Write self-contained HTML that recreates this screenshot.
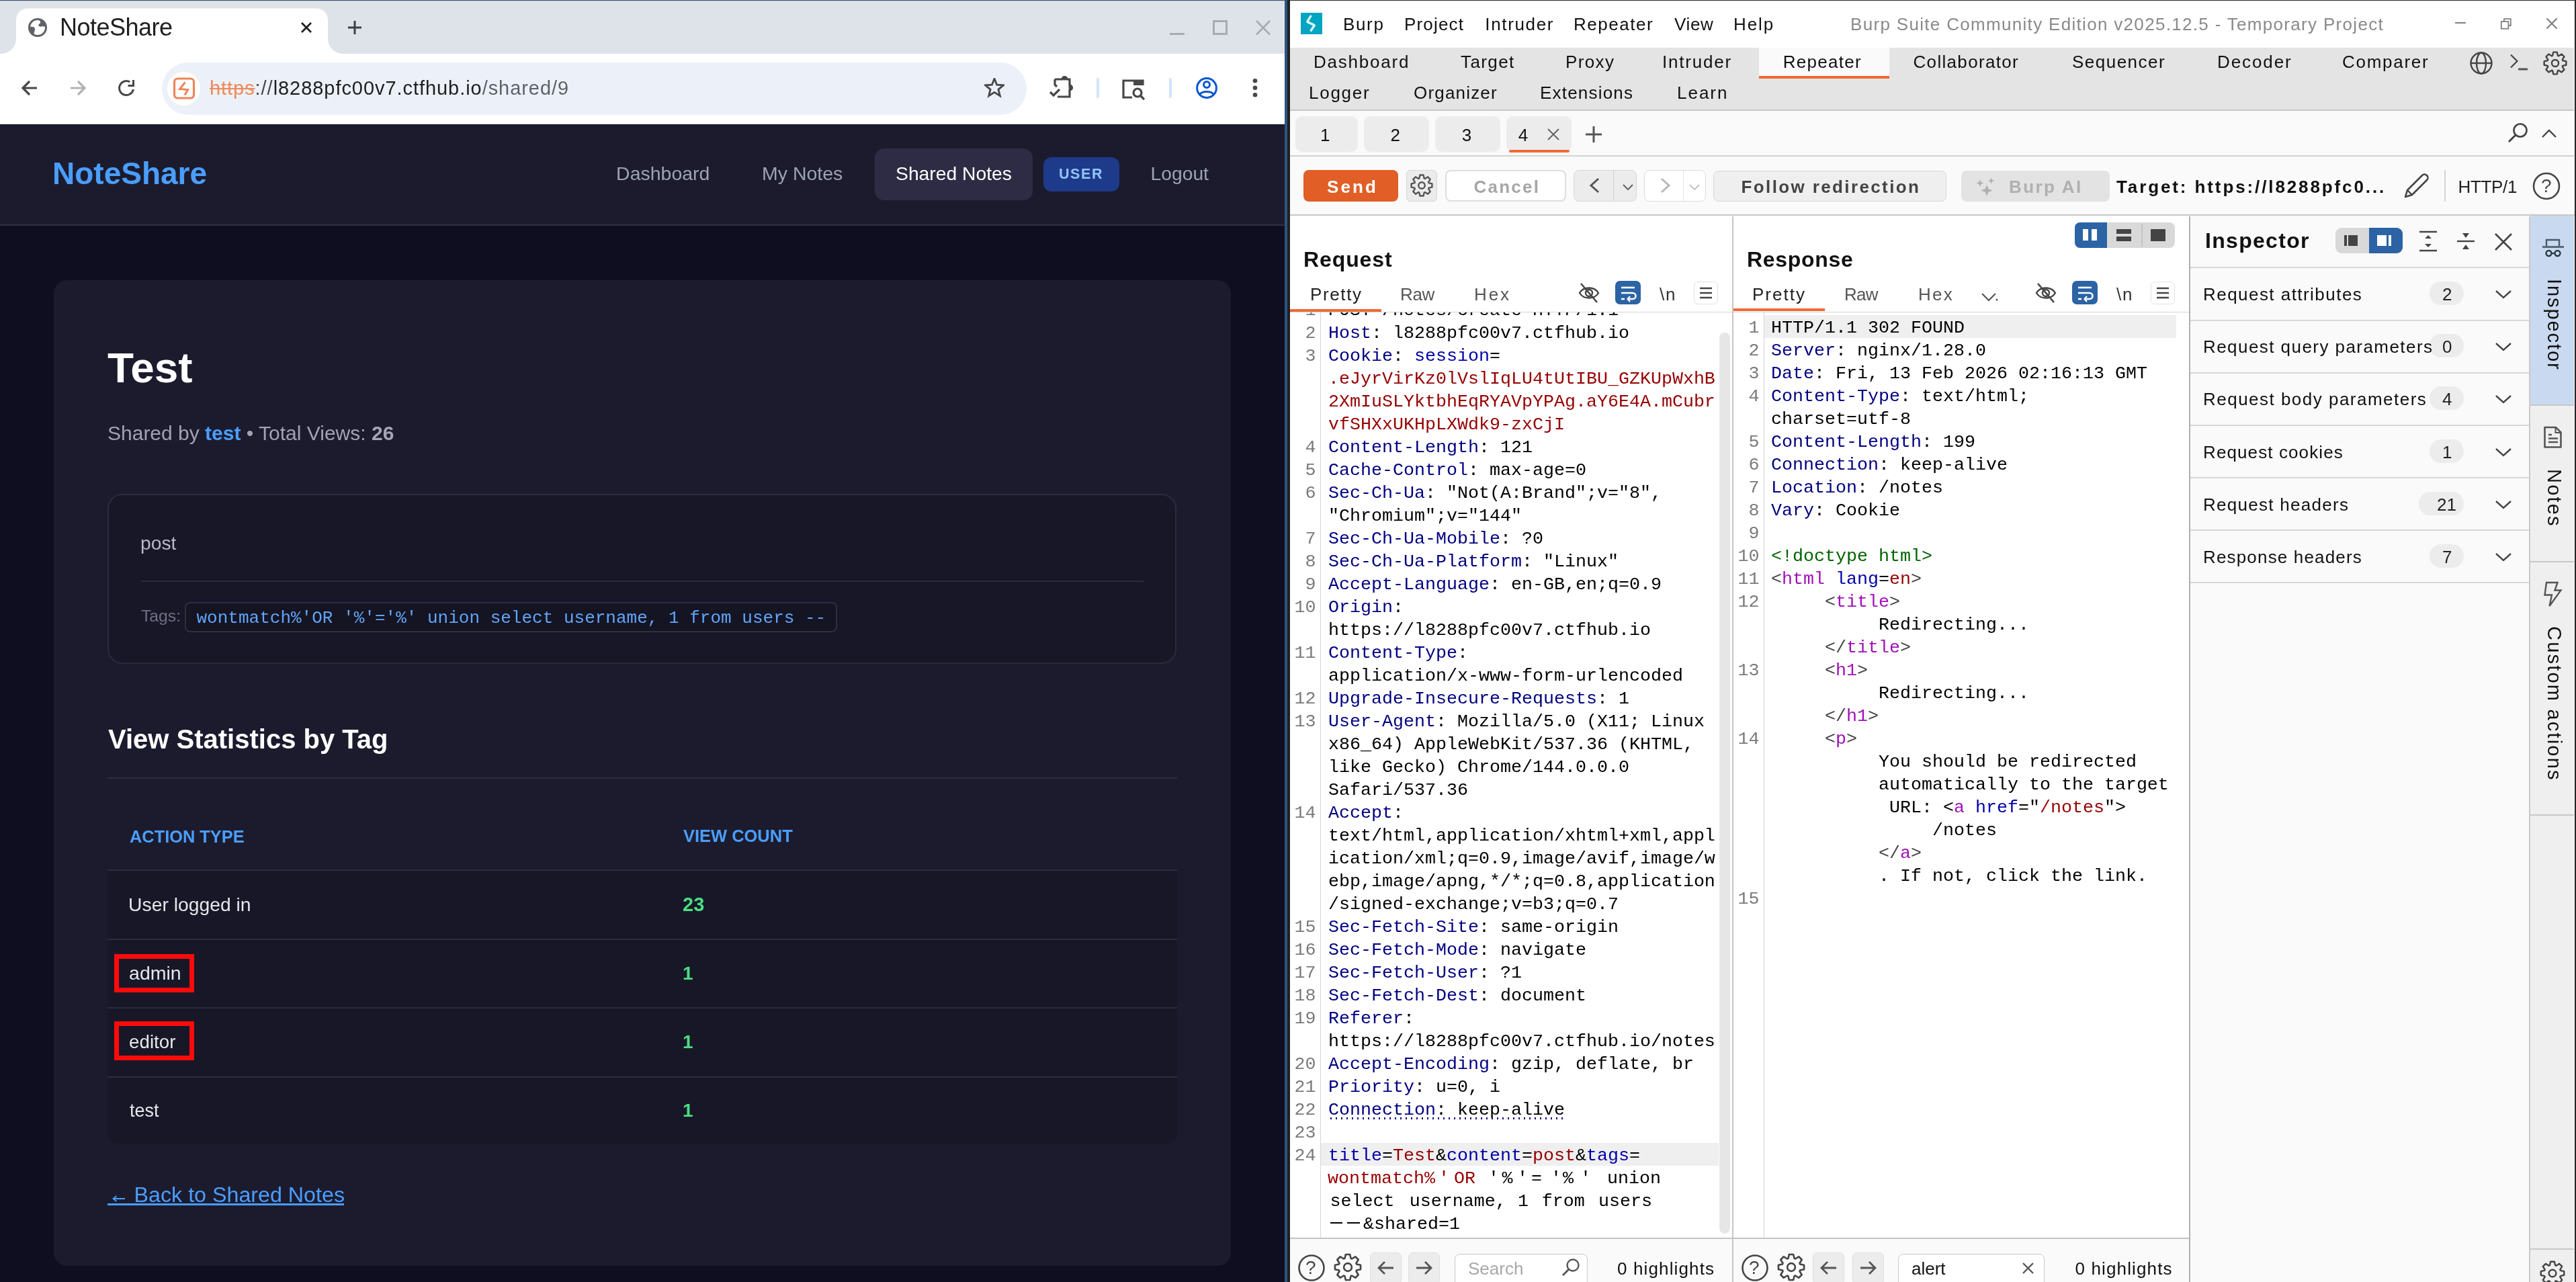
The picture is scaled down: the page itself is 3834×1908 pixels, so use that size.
<!DOCTYPE html>
<html><head><meta charset="utf-8"><style>
html,body{margin:0;padding:0}
body{width:3834px;height:1908px;position:relative;overflow:hidden;background:#fff;font-family:'Liberation Sans',sans-serif}
#W{position:absolute;left:0;top:0;width:3834px;height:1908px;overflow:hidden;will-change:transform}
#W>*{position:absolute;box-sizing:border-box}
</style></head><body><div id="W">
<div style="left:0px;top:0px;width:1912px;height:80px;background:#dee3ea;"></div>
<div style="left:0px;top:0px;width:1912px;height:1px;background:#3b5268;"></div>
<div style="left:0px;top:1px;width:1912px;height:1px;background:#c8d4e0;"></div>
<svg style="left:0px;top:0px;" width="530" height="82" viewBox="0 0 530 82"><path d="M2 80 A22 22 0 0 0 24 58 L24 29.5 A17 17 0 0 1 41 12.5 L471 12.5 A17 17 0 0 1 488 29.5 L488 58 A22 22 0 0 0 510 80 Z" fill="#fff"/></svg>
<svg style="left:42px;top:27px;" width="28" height="28" viewBox="0 0 28 28"><circle cx="14" cy="14" r="12.5" fill="none" stroke="#5f6368" stroke-width="3"/><path d="M14 1.5 C18 4 20 6 16 9 C14 11 17 14 21 12 L26 13 C26 8 22 3 14 1.5Z" fill="#5f6368"/><path d="M2 13 C6 12 10 13 10 16 C10 19 8 21 9 26 C5 24 2 19 2 13Z" fill="#5f6368"/></svg>
<div style="left:89.00px;top:22.58px;font:400 36px/36px 'Liberation Sans',sans-serif;color:#1f1f1f;white-space:pre;letter-spacing:-0.511px;">NoteShare</div>
<svg style="left:444px;top:29px;" width="24" height="24" viewBox="0 0 24 24"><path d="M5 5 L19 19 M19 5 L5 19" stroke="#1f1f1f" stroke-width="2.8"/></svg>
<svg style="left:514px;top:27px;" width="28" height="28" viewBox="0 0 28 28"><path d="M14 4 V24 M4 14 H24" stroke="#3c4043" stroke-width="3"/></svg>
<svg style="left:1736px;top:24px;" width="160" height="34" viewBox="0 0 160 34"><path d="M5 26.5 H26.8" stroke="#a7acb3" stroke-width="3"/><rect x="70.5" y="7.5" width="19" height="19" fill="none" stroke="#a7acb3" stroke-width="3"/><path d="M134 7 L154 27.5 M154 7 L134 27.5" stroke="#a7acb3" stroke-width="2.6"/></svg>
<div style="left:0px;top:80px;width:1912px;height:104px;background:#ffffff;"></div>
<svg style="left:28px;top:115px;" width="32" height="32" viewBox="0 0 32 32"><path d="M27 16 H7 M16 6 L6 16 L16 26" fill="none" stroke="#474747" stroke-width="3.2" stroke-linejoin="miter"/></svg>
<svg style="left:100px;top:115px;" width="32" height="32" viewBox="0 0 32 32"><path d="M5 16 H25 M16 6 L26 16 L16 26" fill="none" stroke="#b3b3b3" stroke-width="3.2"/></svg>
<svg style="left:176px;top:119px;" width="26" height="26" viewBox="0 0 26 26"><path d="M22.4 14 A10.5 10.5 0 1 1 17.2 2.9" fill="none" stroke="#474747" stroke-width="3"/><path d="M14.5 8.5 H22.5 V0" fill="none" stroke="#474747" stroke-width="3"/></svg>
<div style="left:241px;top:93px;width:1287px;height:78px;background:#ecf1f9;border-radius:39px"></div>
<div style="left:249px;top:107px;width:49px;height:50px;background:#ffffff;border-radius:25px"></div>
<svg style="left:256px;top:113px;" width="36" height="36" viewBox="0 0 36 36"><rect x="3.5" y="4" width="29" height="29" rx="5" fill="none" stroke="#ee8558" stroke-width="3.2"/><path d="M19.5 9.5 L11.5 19.5 L23.5 20.5 L19 28.5" fill="none" stroke="#ee8558" stroke-width="3" stroke-linejoin="miter"/></svg>
<div style="left:312.00px;top:117.09px;font:400 29px/29px 'Liberation Sans',sans-serif;color:#1f1f1f;white-space:pre;letter-spacing:0.946px;"><span style="color:#ef8a5a;text-decoration:line-through">https</span><span style="color:#474747">://</span><span style="color:#1f1f1f">l8288pfc00v7.ctfhub.io</span><span style="color:#5f6368">/shared/9</span></div>
<svg style="left:1465px;top:116px;" width="30" height="30" viewBox="0 0 30 30"><path d="M15.00 1.00 L18.64 10.18 L28.51 10.81 L20.90 17.12 L23.35 26.69 L15.00 21.40 L6.65 26.69 L9.10 17.12 L1.49 10.81 L11.36 10.18Z" fill="none" stroke="#474747" stroke-width="2.8" stroke-linejoin="miter"/></svg>
<svg style="left:1560px;top:110px;" width="42" height="38" viewBox="0 0 42 38"><path d="M10 8 H21 A3.5 3.5 0 0 1 28 8 H32 V17 A3.5 3.5 0 0 1 32 24 V34 H14" fill="none" stroke="#474747" stroke-width="3.2"/><path d="M10 8 V16 L13 19" fill="none" stroke="#474747" stroke-width="3.2"/><path d="M3 27 L8 32 L17 23" fill="none" stroke="#474747" stroke-width="3.2"/><circle cx="24.5" cy="6.5" r="3" fill="#474747"/><circle cx="33.5" cy="20.5" r="3" fill="#474747"/></svg>
<div style="left:1632px;top:116px;width:4px;height:30px;background:#d3e3fd;border-radius:2px"></div>
<svg style="left:1668px;top:114px;" width="40" height="36" viewBox="0 0 40 36"><path d="M17 31 H4 V6 H33 V13" fill="none" stroke="#474747" stroke-width="3.2"/><rect x="19" y="5" width="15" height="8" fill="#474747"/><circle cx="25" cy="24" r="6" fill="none" stroke="#474747" stroke-width="3.2"/><path d="M29.5 28.5 L35 34" stroke="#474747" stroke-width="3.2"/></svg>
<div style="left:1740px;top:116px;width:4px;height:30px;background:#d3e3fd;border-radius:2px"></div>
<svg style="left:1778px;top:113px;" width="36" height="36" viewBox="0 0 36 36"><circle cx="18" cy="18" r="14.4" fill="none" stroke="#0b57d0" stroke-width="3"/><circle cx="18" cy="13" r="4.5" fill="none" stroke="#0b57d0" stroke-width="3"/><path d="M7.5 27.5 C11 22 25 22 28.5 27.5" fill="none" stroke="#0b57d0" stroke-width="3"/></svg>
<svg style="left:1862px;top:114px;" width="12" height="34" viewBox="0 0 12 34"><circle cx="6" cy="6.2" r="3.3" fill="#474747"/><circle cx="6" cy="16.7" r="3.3" fill="#474747"/><circle cx="6" cy="27.3" r="3.3" fill="#474747"/></svg>
<div style="left:0px;top:184px;width:1912px;height:1724px;background:#0f0e21;"></div>
<div style="left:0px;top:184px;width:1912px;height:1px;background:#d6d9de;"></div>
<div style="left:0px;top:185px;width:1912px;height:149px;background:#1c1b2e;"></div>
<div style="left:0px;top:334px;width:1912px;height:2px;background:#2e2d43;"></div>
<div style="left:78.00px;top:234.63px;font:700 46.0px/46.0px 'Liberation Sans',sans-serif;color:#4a9eff;white-space:pre;">NoteShare</div>
<div style="left:917.10px;top:243.74px;font:400 28.47px/28.47px 'Liberation Sans',sans-serif;color:#9ca3af;white-space:pre;">Dashboard</div>
<div style="left:1134.10px;top:243.74px;font:400 28.47px/28.47px 'Liberation Sans',sans-serif;color:#9ca3af;white-space:pre;">My Notes</div>
<div style="left:1302px;top:221px;width:235px;height:77px;background:#2d2c44;border-radius:14px"></div>
<div style="left:1333.06px;top:243.91px;font:400 28.27px/28.27px 'Liberation Sans',sans-serif;color:#ffffff;white-space:pre;">Shared Notes</div>
<div style="left:1553px;top:234px;width:113px;height:51px;background:#1e3a8a;border-radius:12px"></div>
<div style="left:1576.00px;top:249.43px;font:700 21.5px/21.5px 'Liberation Sans',sans-serif;color:#93c5fd;white-space:pre;letter-spacing:1.598px;">USER</div>
<div style="left:1712.62px;top:243.95px;font:400 28.23px/28.23px 'Liberation Sans',sans-serif;color:#9ca3af;white-space:pre;">Logout</div>
<div style="left:80px;top:417px;width:1752px;height:1467px;background:#1c1b2e;border-radius:20px"></div>
<div style="left:160.00px;top:515.71px;font:700 63.77px/63.77px 'Liberation Sans',sans-serif;color:#ffffff;white-space:pre;">Test</div>
<div style="left:160.00px;top:629.65px;font:400 30px/30px 'Liberation Sans',sans-serif;color:#a1a1b5;white-space:pre;"><span style="color:#a1a1b5">Shared by </span><span style="color:#4a9eff;font-weight:700">test</span><span style="color:#a1a1b5"> • Total Views: </span><span style="color:#a4a6b8;font-weight:700">26</span></div>
<div style="left:160px;top:735px;width:1591px;height:253px;background:#181727;border:2px solid #2c2b40;border-radius:22px"></div>
<div style="left:209.06px;top:793.76px;font:400 28.21px/28.21px 'Liberation Sans',sans-serif;color:#b8b8c6;white-space:pre;">post</div>
<div style="left:210px;top:864px;width:1492px;height:2px;background:#2c2b40;"></div>
<div style="left:210.00px;top:905.40px;font:400 24.73px/24.73px 'Liberation Sans',sans-serif;color:#6e6e84;white-space:pre;">Tags:</div>
<div style="left:275px;top:896px;width:971px;height:45px;background:#151422;border:2px solid #2e2d42;border-radius:8px"></div>
<div style="left:292.50px;top:906.65px;font:400 26.02px/26.02px 'Liberation Mono',monospace;color:#60a5fa;white-space:pre;">wontmatch%'OR '%'='%' union select username, 1 from users --</div>
<div style="left:161.00px;top:1080.20px;font:700 40.0px/40.0px 'Liberation Sans',sans-serif;color:#ffffff;white-space:pre;">View Statistics by Tag</div>
<div style="left:160px;top:1157px;width:1592px;height:2px;background:#2c2b40;"></div>
<div style="left:193.00px;top:1232.55px;font:700 25.39px/25.39px 'Liberation Sans',sans-serif;color:#4a9eff;white-space:pre;">ACTION TYPE</div>
<div style="left:1017.00px;top:1232.47px;font:700 25.48px/25.48px 'Liberation Sans',sans-serif;color:#4a9eff;white-space:pre;">VIEW COUNT</div>
<div style="left:160px;top:1294px;width:1592px;height:2px;background:#2c2b40;"></div>
<div style="left:160px;top:1296px;width:1592px;height:406px;background:#181727;border-radius:0 0 16px 16px"></div>
<div style="left:160px;top:1397px;width:1592px;height:2px;background:#2c2b40;"></div>
<div style="left:160px;top:1499px;width:1592px;height:2px;background:#2c2b40;"></div>
<div style="left:160px;top:1602px;width:1592px;height:2px;background:#2c2b40;"></div>
<div style="left:191.11px;top:1332.39px;font:400 28.3px/28.3px 'Liberation Sans',sans-serif;color:#e5e7eb;white-space:pre;">User logged in</div>
<div style="left:192.05px;top:1434.24px;font:400 28.47px/28.47px 'Liberation Sans',sans-serif;color:#e5e7eb;white-space:pre;">admin</div>
<div style="left:192.08px;top:1537.09px;font:400 27.71px/27.71px 'Liberation Sans',sans-serif;color:#e5e7eb;white-space:pre;">editor</div>
<div style="left:193.00px;top:1640.24px;font:400 26.93px/26.93px 'Liberation Sans',sans-serif;color:#e5e7eb;white-space:pre;">test</div>
<div style="left:1016.03px;top:1331.82px;font:700 28.97px/28.97px 'Liberation Sans',sans-serif;color:#4ade80;white-space:pre;">23</div>
<div style="left:1016.00px;top:1434.64px;font:700 28px/28px 'Liberation Sans',sans-serif;color:#4ade80;white-space:pre;">1</div>
<div style="left:1016.00px;top:1536.84px;font:700 28px/28px 'Liberation Sans',sans-serif;color:#4ade80;white-space:pre;">1</div>
<div style="left:1016.00px;top:1639.34px;font:700 28px/28px 'Liberation Sans',sans-serif;color:#4ade80;white-space:pre;">1</div>
<div style="left:170px;top:1420px;width:119px;height:57px;background:transparent;border:7px solid #ff0a0a"></div>
<div style="left:170px;top:1520px;width:119px;height:58px;background:transparent;border:7px solid #ff0a0a"></div>
<div style="left:199.59px;top:1762.07px;font:400 32.22px/32.22px 'Liberation Sans',sans-serif;color:#4a9eff;white-space:pre;">Back to Shared Notes</div>
<div style="left:160px;top:1791px;width:352px;height:3px;background:#4a9eff;"></div>
<svg style="left:160px;top:1774px;" width="30" height="20" viewBox="0 0 30 20"><path d="M26 10 H9 M13.5 6 L8.5 10 L13.5 14" fill="none" stroke="#4a9eff" stroke-width="1.8"/></svg>
<div style="left:1912px;top:0px;width:4px;height:1908px;background:#2c5480;"></div>
<div style="left:1916px;top:0px;width:4px;height:1908px;background:#1f2123;"></div>
<div style="left:1920px;top:0px;width:1914px;height:1908px;background:#fafafa;"></div>
<div style="left:3832px;top:0px;width:2px;height:1908px;background:#262626;"></div>
<div style="left:1920px;top:0px;width:1911px;height:71px;background:#ffffff;"></div>
<div style="left:1920px;top:0px;width:1914px;height:1px;background:#262626;"></div>
<div style="left:1936px;top:19px;width:32px;height:32px;background:#00a5c2;"></div>
<svg style="left:1936px;top:19px;" width="32" height="32" viewBox="0 0 32 32"><path d="M15.5 4 L9.5 13.5 L20.5 18.5 L14.5 27.5" fill="none" stroke="#e4fbff" stroke-width="3.2" stroke-linejoin="bevel"/></svg>
<div style="left:1999.00px;top:23.33px;font:400 26px/26px 'Liberation Sans',sans-serif;color:#111;white-space:pre;letter-spacing:1.647px;">Burp</div>
<div style="left:2090.00px;top:23.33px;font:400 26px/26px 'Liberation Sans',sans-serif;color:#111;white-space:pre;letter-spacing:1.184px;">Project</div>
<div style="left:2210.30px;top:23.33px;font:400 26px/26px 'Liberation Sans',sans-serif;color:#111;white-space:pre;letter-spacing:1.651px;">Intruder</div>
<div style="left:2342.00px;top:23.33px;font:400 26px/26px 'Liberation Sans',sans-serif;color:#111;white-space:pre;letter-spacing:1.529px;">Repeater</div>
<div style="left:2492.00px;top:23.33px;font:400 26px/26px 'Liberation Sans',sans-serif;color:#111;white-space:pre;letter-spacing:0.631px;">View</div>
<div style="left:2580.00px;top:23.33px;font:400 26px/26px 'Liberation Sans',sans-serif;color:#111;white-space:pre;letter-spacing:1.896px;">Help</div>
<div style="left:2754.00px;top:23.33px;font:400 26px/26px 'Liberation Sans',sans-serif;color:#8a8a8a;white-space:pre;letter-spacing:1.318px;">Burp Suite Community Edition v2025.12.5 - Temporary Project</div>
<svg style="left:3645px;top:14px;" width="180" height="40" viewBox="0 0 180 40"><path d="M9 20 H25" stroke="#808080" stroke-width="2"/><rect x="77.8" y="18.1" width="10.6" height="10.6" fill="none" stroke="#808080" stroke-width="1.8"/><path d="M82 18 V14.1 H91.8 V24 H88.4" fill="none" stroke="#808080" stroke-width="1.8"/><path d="M145.5 13.5 L160.5 28.5 M160.5 13.5 L145.5 28.5" stroke="#808080" stroke-width="2.2"/></svg>
<div style="left:1920px;top:71px;width:1911px;height:92px;background:#e4e4e4;"></div>
<div style="left:1920px;top:163px;width:1911px;height:2px;background:#c6c6c6;"></div>
<div style="left:2618px;top:71px;width:194px;height:42px;background:#fafafa;"></div>
<div style="left:2618px;top:113px;width:194px;height:4px;background:#f06a35;"></div>
<div style="left:1955.00px;top:78.83px;font:400 26px/26px 'Liberation Sans',sans-serif;color:#111;white-space:pre;letter-spacing:1.783px;">Dashboard</div>
<div style="left:2174.00px;top:78.83px;font:400 26px/26px 'Liberation Sans',sans-serif;color:#111;white-space:pre;letter-spacing:1.392px;">Target</div>
<div style="left:2330.00px;top:78.83px;font:400 26px/26px 'Liberation Sans',sans-serif;color:#111;white-space:pre;letter-spacing:1.385px;">Proxy</div>
<div style="left:2474.00px;top:78.83px;font:400 26px/26px 'Liberation Sans',sans-serif;color:#111;white-space:pre;letter-spacing:1.794px;">Intruder</div>
<div style="left:2653.70px;top:78.83px;font:400 26px/26px 'Liberation Sans',sans-serif;color:#111;white-space:pre;letter-spacing:1.286px;">Repeater</div>
<div style="left:2847.50px;top:78.83px;font:400 26px/26px 'Liberation Sans',sans-serif;color:#111;white-space:pre;letter-spacing:1.321px;">Collaborator</div>
<div style="left:3084.00px;top:78.83px;font:400 26px/26px 'Liberation Sans',sans-serif;color:#111;white-space:pre;letter-spacing:1.487px;">Sequencer</div>
<div style="left:3300.00px;top:78.83px;font:400 26px/26px 'Liberation Sans',sans-serif;color:#111;white-space:pre;letter-spacing:1.897px;">Decoder</div>
<div style="left:3486.00px;top:78.83px;font:400 26px/26px 'Liberation Sans',sans-serif;color:#111;white-space:pre;letter-spacing:1.724px;">Comparer</div>
<div style="left:1948.00px;top:125.23px;font:400 26px/26px 'Liberation Sans',sans-serif;color:#111;white-space:pre;letter-spacing:1.740px;">Logger</div>
<div style="left:2104.00px;top:125.23px;font:400 26px/26px 'Liberation Sans',sans-serif;color:#111;white-space:pre;letter-spacing:1.188px;">Organizer</div>
<div style="left:2292.00px;top:125.23px;font:400 26px/26px 'Liberation Sans',sans-serif;color:#111;white-space:pre;letter-spacing:1.202px;">Extensions</div>
<div style="left:2496.00px;top:125.23px;font:400 26px/26px 'Liberation Sans',sans-serif;color:#111;white-space:pre;letter-spacing:1.990px;">Learn</div>
<svg style="left:3675px;top:76px;" width="36" height="36" viewBox="0 0 36 36"><circle cx="18" cy="18" r="15.5" fill="none" stroke="#444" stroke-width="2.4"/><ellipse cx="18" cy="18" rx="7" ry="15.5" fill="none" stroke="#444" stroke-width="2.4"/><path d="M2.5 18 H33.5" stroke="#444" stroke-width="2.4"/></svg>
<svg style="left:3731px;top:78px;" width="34" height="34" viewBox="0 0 34 34"><path d="M6 3.5 L15.5 13 L6 22.5" fill="none" stroke="#444" stroke-width="2.2"/><path d="M17 25 H31" stroke="#555" stroke-width="3"/></svg>
<svg style="left:3785px;top:76px;" width="36" height="36" viewBox="0 0 36 36"><path d="M29.22 14.09 L34.34 15.28 L34.34 20.72 L29.22 21.91 L28.70 23.16 L31.47 27.63 L27.63 31.47 L23.16 28.70 L21.91 29.22 L20.72 34.34 L15.28 34.34 L14.09 29.22 L12.84 28.70 L8.37 31.47 L4.53 27.63 L7.30 23.16 L6.78 21.91 L1.66 20.72 L1.66 15.28 L6.78 14.09 L7.30 12.84 L4.53 8.37 L8.37 4.53 L12.84 7.30 L14.09 6.78 L15.28 1.66 L20.72 1.66 L21.91 6.78 L23.16 7.30 L27.63 4.53 L31.47 8.37 L28.70 12.84Z" fill="none" stroke="#444" stroke-width="2.4" stroke-linejoin="round"/><circle cx="18.0" cy="18.0" r="5.040000000000001" fill="none" stroke="#444" stroke-width="2.4"/></svg>
<div style="left:1920px;top:165px;width:1911px;height:66px;background:#fafafa;"></div>
<div style="left:1920px;top:231px;width:1911px;height:2px;background:#d2d2d2;"></div>
<div style="left:1928px;top:173px;width:93px;height:53px;background:#ececec;border-radius:10px"></div>
<div style="left:2030px;top:173px;width:97px;height:53px;background:#ececec;border-radius:10px"></div>
<div style="left:2136px;top:173px;width:97px;height:53px;background:#ececec;border-radius:10px"></div>
<div style="left:2242px;top:173px;width:97px;height:53px;background:#ececec;border-radius:10px"></div>
<div style="left:1965.00px;top:187.53px;font:400 26px/26px 'Liberation Sans',sans-serif;color:#111;white-space:pre;">1</div>
<div style="left:2069.60px;top:187.53px;font:400 26px/26px 'Liberation Sans',sans-serif;color:#111;white-space:pre;">2</div>
<div style="left:2175.80px;top:187.53px;font:400 26px/26px 'Liberation Sans',sans-serif;color:#111;white-space:pre;">3</div>
<div style="left:2259.70px;top:187.53px;font:400 26px/26px 'Liberation Sans',sans-serif;color:#111;white-space:pre;">4</div>
<svg style="left:2300px;top:188px;" width="24" height="24" viewBox="0 0 24 24"><path d="M4 4 L20 20 M20 4 L4 20" stroke="#666" stroke-width="2"/></svg>
<div style="left:2246px;top:223px;width:90px;height:4px;background:#f06a35;border-radius:2px"></div>
<svg style="left:2356px;top:186px;" width="32" height="28" viewBox="0 0 32 28"><path d="M16 2 V26 M4 14 H28" stroke="#555" stroke-width="3"/></svg>
<svg style="left:3730px;top:180px;" width="36" height="36" viewBox="0 0 36 36"><circle cx="21" cy="14" r="9.5" fill="none" stroke="#444" stroke-width="2.6"/><path d="M14 21 L4 31" stroke="#444" stroke-width="3"/></svg>
<svg style="left:3779px;top:189px" width="30" height="20" viewBox="0 0 30 20"><rect width="30" height="22" fill="#fafafa"/><path d="M5 15 L15 5 L25 15" fill="none" stroke="#444" stroke-width="2.4"/></svg>
<div style="left:1920px;top:233px;width:1912px;height:87px;background:#fafafa;"></div>
<div style="left:1920px;top:319px;width:1912px;height:2px;background:#c8c8c8;"></div>
<div style="left:1940px;top:253px;width:141px;height:47px;background:#e15f27;border-radius:8px"></div>
<div style="left:1975.00px;top:265.03px;font:700 26px/26px 'Liberation Sans',sans-serif;color:#fff;white-space:pre;letter-spacing:3.105px;">Send</div>
<div style="left:2093px;top:253px;width:46px;height:47px;background:#ebebeb;border:1px solid #d6d6d6;border-radius:6px"></div>
<svg style="left:2099px;top:259px;" width="34" height="34" viewBox="0 0 34 34"><path d="M27.59 13.30 L32.43 14.43 L32.43 19.57 L27.59 20.70 L27.10 21.88 L29.72 26.09 L26.09 29.72 L21.88 27.10 L20.70 27.59 L19.57 32.43 L14.43 32.43 L13.30 27.59 L12.12 27.10 L7.91 29.72 L4.28 26.09 L6.90 21.88 L6.41 20.70 L1.57 19.57 L1.57 14.43 L6.41 13.30 L6.90 12.12 L4.28 7.91 L7.91 4.28 L12.12 6.90 L13.30 6.41 L14.43 1.57 L19.57 1.57 L20.70 6.41 L21.88 6.90 L26.09 4.28 L29.72 7.91 L27.10 12.12Z" fill="none" stroke="#555" stroke-width="2.4" stroke-linejoin="round"/><circle cx="17.0" cy="17.0" r="4.760000000000001" fill="none" stroke="#555" stroke-width="2.4"/></svg>
<div style="left:2151px;top:253px;width:180px;height:47px;background:#ffffff;border:2px solid #dedede;border-radius:8px"></div>
<div style="left:2193.40px;top:265.03px;font:700 26px/26px 'Liberation Sans',sans-serif;color:#a6a6a6;white-space:pre;letter-spacing:2.252px;">Cancel</div>
<div style="left:2342px;top:253px;width:94px;height:47px;background:#ececec;border:1px solid #d8d8d8;border-radius:8px"></div>
<div style="left:2401px;top:254px;width:1px;height:45px;background:#d0d0d0;"></div>
<svg style="left:2362px;top:263px;" width="24" height="26" viewBox="0 0 24 26"><path d="M17 3 L6 13 L17 23" fill="none" stroke="#555" stroke-width="3"/></svg>
<svg style="left:2414px;top:273px;" width="18" height="12" viewBox="0 0 18 12"><path d="M2 2 L9.0 9 L16 2" fill="none" stroke="#666" stroke-width="2.2"/></svg>
<div style="left:2447px;top:253px;width:92px;height:47px;background:#ffffff;border:1px solid #dcdcdc;border-radius:8px"></div>
<div style="left:2505px;top:254px;width:1px;height:45px;background:#e2e2e2;"></div>
<svg style="left:2466px;top:263px;" width="24" height="26" viewBox="0 0 24 26"><path d="M7 3 L18 13 L7 23" fill="none" stroke="#b8b8b8" stroke-width="3"/></svg>
<svg style="left:2513px;top:273px;" width="18" height="12" viewBox="0 0 18 12"><path d="M2 2 L9.0 9 L16 2" fill="none" stroke="#c4c4c4" stroke-width="2.2"/></svg>
<div style="left:2550px;top:254px;width:347px;height:46px;background:#efefef;border:1px solid #d8d8d8;border-radius:8px"></div>
<div style="left:2591.50px;top:265.03px;font:700 26px/26px 'Liberation Sans',sans-serif;color:#444;white-space:pre;letter-spacing:2.381px;">Follow redirection</div>
<div style="left:2919px;top:254px;width:221px;height:46px;background:#e3e3e3;border-radius:8px"></div>
<svg style="left:2938px;top:262px;" width="34" height="34" viewBox="0 0 34 34"><path d="M19 13.0 L21.38 19.12 L27.5 21.5 L21.38 23.88 L19 30.0 L16.62 23.88 L10.5 21.5 L16.62 19.12Z" fill="#b0b0b0"/><path d="M9 5.0 L10.54 8.96 L14.5 10.5 L10.54 12.04 L9 16.0 L7.46 12.04 L3.5 10.5 L7.46 8.96Z" fill="#b0b0b0"/><path d="M25.5 2.2 L26.844 5.656 L30.3 7 L26.844 8.344 L25.5 11.8 L24.156 8.344 L20.7 7 L24.156 5.656Z" fill="#b0b0b0"/></svg>
<div style="left:2990.00px;top:265.03px;font:700 26px/26px 'Liberation Sans',sans-serif;color:#b0b0b0;white-space:pre;letter-spacing:2.390px;">Burp AI</div>
<div style="left:3150.00px;top:264.83px;font:700 26px/26px 'Liberation Sans',sans-serif;color:#111;white-space:pre;letter-spacing:2.888px;">Target: https://l8288pfc0...</div>
<svg style="left:3574px;top:255px;" width="44" height="44" viewBox="0 0 44 44"><path d="M6 38 L9 28 L31 6 A3.5 3.5 0 0 1 38 13 L16 35 Z" fill="none" stroke="#444" stroke-width="2.6" stroke-linejoin="round"/><path d="M9 28 L16 35" stroke="#444" stroke-width="2.4"/></svg>
<div style="left:3638px;top:253px;width:2px;height:47px;background:#d4d4d4;"></div>
<div style="left:3658.50px;top:264.83px;font:400 26px/26px 'Liberation Sans',sans-serif;color:#222;white-space:pre;letter-spacing:-0.321px;">HTTP/1</div>
<svg style="left:3768px;top:255px;" width="44" height="44" viewBox="0 0 44 44"><circle cx="22" cy="22" r="19" fill="none" stroke="#444" stroke-width="2.6"/></svg>
<div style="left:3782.00px;top:263.34px;font:400 28px/28px 'Liberation Sans',sans-serif;color:#444;white-space:pre;">?</div>
<div style="left:1920px;top:322px;width:658px;height:1520px;background:#ffffff;"></div>
<div style="left:2580px;top:322px;width:678px;height:1520px;background:#ffffff;"></div>
<div style="left:2578px;top:322px;width:2px;height:1586px;background:#c4c4c4;"></div>
<div style="left:3258px;top:322px;width:2px;height:1586px;background:#b0b0b0;"></div>
<div style="left:3260px;top:322px;width:504px;height:1586px;background:#fafafa;"></div>
<div style="left:3764px;top:322px;width:2px;height:1586px;background:#c8c8c8;"></div>
<div style="left:3766px;top:322px;width:65px;height:1586px;background:#f0eff0;"></div>
<div style="left:1966px;top:1701px;width:592px;height:34px;background:#efefef;"></div>
<div style="left:1965px;top:465px;width:1px;height:1377px;background:#d6d6d6;"></div>
<div style="left:2559px;top:495px;width:16px;height:1341px;background:#e6e6e6;border-radius:8px"></div>
<div style="left:1977.00px;top:448.57px;font:400 26.66px/26.66px 'Liberation Mono',monospace;color:#000000;white-space:pre;">POST /notes/create HTTP/1.1</div>
<div style="left:1977.00px;top:482.57px;font:400 26.66px/26.66px 'Liberation Mono',monospace;color:#000080;white-space:pre;">Host</div>
<div style="left:2041.00px;top:482.57px;font:400 26.66px/26.66px 'Liberation Mono',monospace;color:#000000;white-space:pre;">:</div>
<div style="left:2057.00px;top:482.57px;font:400 26.66px/26.66px 'Liberation Mono',monospace;color:#000000;white-space:pre;"> l8288pfc00v7.ctfhub.io</div>
<div style="left:1977.00px;top:516.57px;font:400 26.66px/26.66px 'Liberation Mono',monospace;color:#000080;white-space:pre;">Cookie</div>
<div style="left:2073.00px;top:516.57px;font:400 26.66px/26.66px 'Liberation Mono',monospace;color:#000000;white-space:pre;">:</div>
<div style="left:2105.00px;top:516.57px;font:400 26.66px/26.66px 'Liberation Mono',monospace;color:#0000a8;white-space:pre;">session</div>
<div style="left:2217.00px;top:516.57px;font:400 26.66px/26.66px 'Liberation Mono',monospace;color:#000000;white-space:pre;">=</div>
<div style="left:1977.00px;top:550.57px;font:400 26.66px/26.66px 'Liberation Mono',monospace;color:#960000;white-space:pre;">.eJyrVirKz0lVslIqLU4tUtIBU_GZKUpWxhB</div>
<div style="left:1977.00px;top:584.57px;font:400 26.66px/26.66px 'Liberation Mono',monospace;color:#960000;white-space:pre;">2XmIuSLYktbhEqRYAVpYPAg.aY6E4A.mCubr</div>
<div style="left:1977.00px;top:618.57px;font:400 26.66px/26.66px 'Liberation Mono',monospace;color:#960000;white-space:pre;">vfSHXxUKHpLXWdk9-zxCjI</div>
<div style="left:1977.00px;top:652.57px;font:400 26.66px/26.66px 'Liberation Mono',monospace;color:#000080;white-space:pre;">Content-Length</div>
<div style="left:2201.00px;top:652.57px;font:400 26.66px/26.66px 'Liberation Mono',monospace;color:#000000;white-space:pre;">:</div>
<div style="left:2217.00px;top:652.57px;font:400 26.66px/26.66px 'Liberation Mono',monospace;color:#000000;white-space:pre;"> 121</div>
<div style="left:1977.00px;top:686.57px;font:400 26.66px/26.66px 'Liberation Mono',monospace;color:#000080;white-space:pre;">Cache-Control</div>
<div style="left:2185.00px;top:686.57px;font:400 26.66px/26.66px 'Liberation Mono',monospace;color:#000000;white-space:pre;">:</div>
<div style="left:2201.00px;top:686.57px;font:400 26.66px/26.66px 'Liberation Mono',monospace;color:#000000;white-space:pre;"> max-age=0</div>
<div style="left:1977.00px;top:720.57px;font:400 26.66px/26.66px 'Liberation Mono',monospace;color:#000080;white-space:pre;">Sec-Ch-Ua</div>
<div style="left:2121.00px;top:720.57px;font:400 26.66px/26.66px 'Liberation Mono',monospace;color:#000000;white-space:pre;">:</div>
<div style="left:2137.00px;top:720.57px;font:400 26.66px/26.66px 'Liberation Mono',monospace;color:#000000;white-space:pre;"> "Not(A:Brand";v="8",</div>
<div style="left:1977.00px;top:754.57px;font:400 26.66px/26.66px 'Liberation Mono',monospace;color:#000000;white-space:pre;">"Chromium";v="144"</div>
<div style="left:1977.00px;top:788.57px;font:400 26.66px/26.66px 'Liberation Mono',monospace;color:#000080;white-space:pre;">Sec-Ch-Ua-Mobile</div>
<div style="left:2233.00px;top:788.57px;font:400 26.66px/26.66px 'Liberation Mono',monospace;color:#000000;white-space:pre;">:</div>
<div style="left:2249.00px;top:788.57px;font:400 26.66px/26.66px 'Liberation Mono',monospace;color:#000000;white-space:pre;"> ?0</div>
<div style="left:1977.00px;top:822.57px;font:400 26.66px/26.66px 'Liberation Mono',monospace;color:#000080;white-space:pre;">Sec-Ch-Ua-Platform</div>
<div style="left:2265.00px;top:822.57px;font:400 26.66px/26.66px 'Liberation Mono',monospace;color:#000000;white-space:pre;">:</div>
<div style="left:2281.00px;top:822.57px;font:400 26.66px/26.66px 'Liberation Mono',monospace;color:#000000;white-space:pre;"> "Linux"</div>
<div style="left:1977.00px;top:856.57px;font:400 26.66px/26.66px 'Liberation Mono',monospace;color:#000080;white-space:pre;">Accept-Language</div>
<div style="left:2217.00px;top:856.57px;font:400 26.66px/26.66px 'Liberation Mono',monospace;color:#000000;white-space:pre;">:</div>
<div style="left:2233.00px;top:856.57px;font:400 26.66px/26.66px 'Liberation Mono',monospace;color:#000000;white-space:pre;"> en-GB,en;q=0.9</div>
<div style="left:1977.00px;top:890.57px;font:400 26.66px/26.66px 'Liberation Mono',monospace;color:#000080;white-space:pre;">Origin</div>
<div style="left:2073.00px;top:890.57px;font:400 26.66px/26.66px 'Liberation Mono',monospace;color:#000000;white-space:pre;">:</div>
<div style="left:1977.00px;top:924.57px;font:400 26.66px/26.66px 'Liberation Mono',monospace;color:#000000;white-space:pre;">https://l8288pfc00v7.ctfhub.io</div>
<div style="left:1977.00px;top:958.57px;font:400 26.66px/26.66px 'Liberation Mono',monospace;color:#000080;white-space:pre;">Content-Type</div>
<div style="left:2169.00px;top:958.57px;font:400 26.66px/26.66px 'Liberation Mono',monospace;color:#000000;white-space:pre;">:</div>
<div style="left:1977.00px;top:992.57px;font:400 26.66px/26.66px 'Liberation Mono',monospace;color:#000000;white-space:pre;">application/x-www-form-urlencoded</div>
<div style="left:1977.00px;top:1026.57px;font:400 26.66px/26.66px 'Liberation Mono',monospace;color:#000080;white-space:pre;">Upgrade-Insecure-Requests</div>
<div style="left:2377.00px;top:1026.57px;font:400 26.66px/26.66px 'Liberation Mono',monospace;color:#000000;white-space:pre;">:</div>
<div style="left:2393.00px;top:1026.57px;font:400 26.66px/26.66px 'Liberation Mono',monospace;color:#000000;white-space:pre;"> 1</div>
<div style="left:1977.00px;top:1060.57px;font:400 26.66px/26.66px 'Liberation Mono',monospace;color:#000080;white-space:pre;">User-Agent</div>
<div style="left:2137.00px;top:1060.57px;font:400 26.66px/26.66px 'Liberation Mono',monospace;color:#000000;white-space:pre;">:</div>
<div style="left:2153.00px;top:1060.57px;font:400 26.66px/26.66px 'Liberation Mono',monospace;color:#000000;white-space:pre;"> Mozilla/5.0 (X11; Linux</div>
<div style="left:1977.00px;top:1094.57px;font:400 26.66px/26.66px 'Liberation Mono',monospace;color:#000000;white-space:pre;">x86_64) AppleWebKit/537.36 (KHTML,</div>
<div style="left:1977.00px;top:1128.57px;font:400 26.66px/26.66px 'Liberation Mono',monospace;color:#000000;white-space:pre;">like Gecko) Chrome/144.0.0.0</div>
<div style="left:1977.00px;top:1162.57px;font:400 26.66px/26.66px 'Liberation Mono',monospace;color:#000000;white-space:pre;">Safari/537.36</div>
<div style="left:1977.00px;top:1196.57px;font:400 26.66px/26.66px 'Liberation Mono',monospace;color:#000080;white-space:pre;">Accept</div>
<div style="left:2073.00px;top:1196.57px;font:400 26.66px/26.66px 'Liberation Mono',monospace;color:#000000;white-space:pre;">:</div>
<div style="left:1977.00px;top:1230.57px;font:400 26.66px/26.66px 'Liberation Mono',monospace;color:#000000;white-space:pre;">text/html,application/xhtml+xml,appl</div>
<div style="left:1977.00px;top:1264.57px;font:400 26.66px/26.66px 'Liberation Mono',monospace;color:#000000;white-space:pre;">ication/xml;q=0.9,image/avif,image/w</div>
<div style="left:1977.00px;top:1298.57px;font:400 26.66px/26.66px 'Liberation Mono',monospace;color:#000000;white-space:pre;">ebp,image/apng,*/*;q=0.8,application</div>
<div style="left:1977.00px;top:1332.57px;font:400 26.66px/26.66px 'Liberation Mono',monospace;color:#000000;white-space:pre;">/signed-exchange;v=b3;q=0.7</div>
<div style="left:1977.00px;top:1366.57px;font:400 26.66px/26.66px 'Liberation Mono',monospace;color:#000080;white-space:pre;">Sec-Fetch-Site</div>
<div style="left:2201.00px;top:1366.57px;font:400 26.66px/26.66px 'Liberation Mono',monospace;color:#000000;white-space:pre;">:</div>
<div style="left:2217.00px;top:1366.57px;font:400 26.66px/26.66px 'Liberation Mono',monospace;color:#000000;white-space:pre;"> same-origin</div>
<div style="left:1977.00px;top:1400.57px;font:400 26.66px/26.66px 'Liberation Mono',monospace;color:#000080;white-space:pre;">Sec-Fetch-Mode</div>
<div style="left:2201.00px;top:1400.57px;font:400 26.66px/26.66px 'Liberation Mono',monospace;color:#000000;white-space:pre;">:</div>
<div style="left:2217.00px;top:1400.57px;font:400 26.66px/26.66px 'Liberation Mono',monospace;color:#000000;white-space:pre;"> navigate</div>
<div style="left:1977.00px;top:1434.57px;font:400 26.66px/26.66px 'Liberation Mono',monospace;color:#000080;white-space:pre;">Sec-Fetch-User</div>
<div style="left:2201.00px;top:1434.57px;font:400 26.66px/26.66px 'Liberation Mono',monospace;color:#000000;white-space:pre;">:</div>
<div style="left:2217.00px;top:1434.57px;font:400 26.66px/26.66px 'Liberation Mono',monospace;color:#000000;white-space:pre;"> ?1</div>
<div style="left:1977.00px;top:1468.57px;font:400 26.66px/26.66px 'Liberation Mono',monospace;color:#000080;white-space:pre;">Sec-Fetch-Dest</div>
<div style="left:2201.00px;top:1468.57px;font:400 26.66px/26.66px 'Liberation Mono',monospace;color:#000000;white-space:pre;">:</div>
<div style="left:2217.00px;top:1468.57px;font:400 26.66px/26.66px 'Liberation Mono',monospace;color:#000000;white-space:pre;"> document</div>
<div style="left:1977.00px;top:1502.57px;font:400 26.66px/26.66px 'Liberation Mono',monospace;color:#000080;white-space:pre;">Referer</div>
<div style="left:2089.00px;top:1502.57px;font:400 26.66px/26.66px 'Liberation Mono',monospace;color:#000000;white-space:pre;">:</div>
<div style="left:1977.00px;top:1536.57px;font:400 26.66px/26.66px 'Liberation Mono',monospace;color:#000000;white-space:pre;">https://l8288pfc00v7.ctfhub.io/notes</div>
<div style="left:1977.00px;top:1570.57px;font:400 26.66px/26.66px 'Liberation Mono',monospace;color:#000080;white-space:pre;">Accept-Encoding</div>
<div style="left:2217.00px;top:1570.57px;font:400 26.66px/26.66px 'Liberation Mono',monospace;color:#000000;white-space:pre;">:</div>
<div style="left:2233.00px;top:1570.57px;font:400 26.66px/26.66px 'Liberation Mono',monospace;color:#000000;white-space:pre;"> gzip, deflate, br</div>
<div style="left:1977.00px;top:1604.57px;font:400 26.66px/26.66px 'Liberation Mono',monospace;color:#000080;white-space:pre;">Priority</div>
<div style="left:2105.00px;top:1604.57px;font:400 26.66px/26.66px 'Liberation Mono',monospace;color:#000000;white-space:pre;">:</div>
<div style="left:2121.00px;top:1604.57px;font:400 26.66px/26.66px 'Liberation Mono',monospace;color:#000000;white-space:pre;"> u=0, i</div>
<div style="left:1977.00px;top:1638.57px;font:400 26.66px/26.66px 'Liberation Mono',monospace;color:#000080;white-space:pre;">Connection</div>
<div style="left:2137.00px;top:1638.57px;font:400 26.66px/26.66px 'Liberation Mono',monospace;color:#000000;white-space:pre;">:</div>
<div style="left:2153.00px;top:1638.57px;font:400 26.66px/26.66px 'Liberation Mono',monospace;color:#000000;white-space:pre;"> keep-alive</div>
<div style="left:1977.00px;top:1706.57px;font:400 26.66px/26.66px 'Liberation Mono',monospace;color:#0000a8;white-space:pre;">title</div>
<div style="left:2057.00px;top:1706.57px;font:400 26.66px/26.66px 'Liberation Mono',monospace;color:#000000;white-space:pre;">=</div>
<div style="left:2073.00px;top:1706.57px;font:400 26.66px/26.66px 'Liberation Mono',monospace;color:#960000;white-space:pre;">Test</div>
<div style="left:2137.00px;top:1706.57px;font:400 26.66px/26.66px 'Liberation Mono',monospace;color:#000000;white-space:pre;">&amp;</div>
<div style="left:2153.00px;top:1706.57px;font:400 26.66px/26.66px 'Liberation Mono',monospace;color:#0000a8;white-space:pre;">content</div>
<div style="left:2265.00px;top:1706.57px;font:400 26.66px/26.66px 'Liberation Mono',monospace;color:#000000;white-space:pre;">=</div>
<div style="left:2281.00px;top:1706.57px;font:400 26.66px/26.66px 'Liberation Mono',monospace;color:#960000;white-space:pre;">post</div>
<div style="left:2345.00px;top:1706.57px;font:400 26.66px/26.66px 'Liberation Mono',monospace;color:#000000;white-space:pre;">&amp;</div>
<div style="left:2361.00px;top:1706.57px;font:400 26.66px/26.66px 'Liberation Mono',monospace;color:#0000a8;white-space:pre;">tags</div>
<div style="left:2425.00px;top:1706.57px;font:400 26.66px/26.66px 'Liberation Mono',monospace;color:#000000;white-space:pre;">=</div>
<div style="left:1977px;top:1662.7px;width:352px;height:3px;background-image:radial-gradient(circle,#000080 1.2px,transparent 1.4px);background-size:8px 3px"></div>
<div style="left:1976.00px;top:1740.57px;font:400 26.66px/26.66px 'Liberation Mono',monospace;color:#960000;white-space:pre;">wontmatch%</div>
<div style="left:2141.00px;top:1740.57px;font:400 26.66px/26.66px 'Liberation Mono',monospace;color:#960000;white-space:pre;">'</div>
<div style="left:2164.00px;top:1740.57px;font:400 26.66px/26.66px 'Liberation Mono',monospace;color:#960000;white-space:pre;">OR</div>
<div style="left:2215.00px;top:1740.57px;font:400 26.66px/26.66px 'Liberation Mono',monospace;color:#000000;white-space:pre;">'</div>
<div style="left:2235.50px;top:1740.57px;font:400 26.66px/26.66px 'Liberation Mono',monospace;color:#000000;white-space:pre;">%</div>
<div style="left:2258.00px;top:1740.57px;font:400 26.66px/26.66px 'Liberation Mono',monospace;color:#000000;white-space:pre;">'</div>
<div style="left:2279.00px;top:1740.57px;font:400 26.66px/26.66px 'Liberation Mono',monospace;color:#000000;white-space:pre;">=</div>
<div style="left:2308.00px;top:1740.57px;font:400 26.66px/26.66px 'Liberation Mono',monospace;color:#000000;white-space:pre;">'</div>
<div style="left:2326.00px;top:1740.57px;font:400 26.66px/26.66px 'Liberation Mono',monospace;color:#000000;white-space:pre;">%</div>
<div style="left:2352.00px;top:1740.57px;font:400 26.66px/26.66px 'Liberation Mono',monospace;color:#000000;white-space:pre;">'</div>
<div style="left:2392.00px;top:1740.57px;font:400 26.66px/26.66px 'Liberation Mono',monospace;color:#000000;white-space:pre;">union</div>
<div style="left:1980px;top:1818.7px;width:18px;height:2.5px;background:#000000;"></div>
<div style="left:2005px;top:1818.7px;width:19px;height:2.5px;background:#000000;"></div>
<div style="left:2029.00px;top:1808.57px;font:400 26.66px/26.66px 'Liberation Mono',monospace;color:#000000;white-space:pre;">&amp;shared=1</div>
<div style="left:1979.50px;top:1774.57px;font:400 26.66px/26.66px 'Liberation Mono',monospace;color:#000000;white-space:pre;">select</div>
<div style="left:2097.70px;top:1774.57px;font:400 26.66px/26.66px 'Liberation Mono',monospace;color:#000000;white-space:pre;">username,</div>
<div style="left:2259.00px;top:1774.57px;font:400 26.66px/26.66px 'Liberation Mono',monospace;color:#000000;white-space:pre;">1</div>
<div style="left:2294.80px;top:1774.57px;font:400 26.66px/26.66px 'Liberation Mono',monospace;color:#000000;white-space:pre;">from</div>
<div style="left:2379.00px;top:1774.57px;font:400 26.66px/26.66px 'Liberation Mono',monospace;color:#000000;white-space:pre;">users</div>
<div style="left:1942.50px;top:448.57px;font:400 26.66px/26.66px 'Liberation Mono',monospace;color:#7a7a7a;white-space:pre;">1</div>
<div style="left:1942.50px;top:482.57px;font:400 26.66px/26.66px 'Liberation Mono',monospace;color:#7a7a7a;white-space:pre;">2</div>
<div style="left:1942.50px;top:516.57px;font:400 26.66px/26.66px 'Liberation Mono',monospace;color:#7a7a7a;white-space:pre;">3</div>
<div style="left:1942.50px;top:652.57px;font:400 26.66px/26.66px 'Liberation Mono',monospace;color:#7a7a7a;white-space:pre;">4</div>
<div style="left:1942.50px;top:686.57px;font:400 26.66px/26.66px 'Liberation Mono',monospace;color:#7a7a7a;white-space:pre;">5</div>
<div style="left:1942.50px;top:720.57px;font:400 26.66px/26.66px 'Liberation Mono',monospace;color:#7a7a7a;white-space:pre;">6</div>
<div style="left:1942.50px;top:788.57px;font:400 26.66px/26.66px 'Liberation Mono',monospace;color:#7a7a7a;white-space:pre;">7</div>
<div style="left:1942.50px;top:822.57px;font:400 26.66px/26.66px 'Liberation Mono',monospace;color:#7a7a7a;white-space:pre;">8</div>
<div style="left:1942.50px;top:856.57px;font:400 26.66px/26.66px 'Liberation Mono',monospace;color:#7a7a7a;white-space:pre;">9</div>
<div style="left:1926.50px;top:890.57px;font:400 26.66px/26.66px 'Liberation Mono',monospace;color:#7a7a7a;white-space:pre;">10</div>
<div style="left:1926.50px;top:958.57px;font:400 26.66px/26.66px 'Liberation Mono',monospace;color:#7a7a7a;white-space:pre;">11</div>
<div style="left:1926.50px;top:1026.57px;font:400 26.66px/26.66px 'Liberation Mono',monospace;color:#7a7a7a;white-space:pre;">12</div>
<div style="left:1926.50px;top:1060.57px;font:400 26.66px/26.66px 'Liberation Mono',monospace;color:#7a7a7a;white-space:pre;">13</div>
<div style="left:1926.50px;top:1196.57px;font:400 26.66px/26.66px 'Liberation Mono',monospace;color:#7a7a7a;white-space:pre;">14</div>
<div style="left:1926.50px;top:1366.57px;font:400 26.66px/26.66px 'Liberation Mono',monospace;color:#7a7a7a;white-space:pre;">15</div>
<div style="left:1926.50px;top:1400.57px;font:400 26.66px/26.66px 'Liberation Mono',monospace;color:#7a7a7a;white-space:pre;">16</div>
<div style="left:1926.50px;top:1434.57px;font:400 26.66px/26.66px 'Liberation Mono',monospace;color:#7a7a7a;white-space:pre;">17</div>
<div style="left:1926.50px;top:1468.57px;font:400 26.66px/26.66px 'Liberation Mono',monospace;color:#7a7a7a;white-space:pre;">18</div>
<div style="left:1926.50px;top:1502.57px;font:400 26.66px/26.66px 'Liberation Mono',monospace;color:#7a7a7a;white-space:pre;">19</div>
<div style="left:1926.50px;top:1570.57px;font:400 26.66px/26.66px 'Liberation Mono',monospace;color:#7a7a7a;white-space:pre;">20</div>
<div style="left:1926.50px;top:1604.57px;font:400 26.66px/26.66px 'Liberation Mono',monospace;color:#7a7a7a;white-space:pre;">21</div>
<div style="left:1926.50px;top:1638.57px;font:400 26.66px/26.66px 'Liberation Mono',monospace;color:#7a7a7a;white-space:pre;">22</div>
<div style="left:1926.50px;top:1672.57px;font:400 26.66px/26.66px 'Liberation Mono',monospace;color:#7a7a7a;white-space:pre;">23</div>
<div style="left:1926.50px;top:1706.57px;font:400 26.66px/26.66px 'Liberation Mono',monospace;color:#7a7a7a;white-space:pre;">24</div>
<div style="left:2626px;top:469px;width:613px;height:34px;background:#efefef;"></div>
<div style="left:2625px;top:465px;width:1px;height:1377px;background:#d6d6d6;"></div>
<div style="left:2636.00px;top:474.57px;font:400 26.66px/26.66px 'Liberation Mono',monospace;color:#000000;white-space:pre;">HTTP/1.1 302 FOUND</div>
<div style="left:2636.00px;top:508.57px;font:400 26.66px/26.66px 'Liberation Mono',monospace;color:#000080;white-space:pre;">Server</div>
<div style="left:2732.00px;top:508.57px;font:400 26.66px/26.66px 'Liberation Mono',monospace;color:#000000;white-space:pre;">:</div>
<div style="left:2748.00px;top:508.57px;font:400 26.66px/26.66px 'Liberation Mono',monospace;color:#000000;white-space:pre;"> nginx/1.28.0</div>
<div style="left:2636.00px;top:542.57px;font:400 26.66px/26.66px 'Liberation Mono',monospace;color:#000080;white-space:pre;">Date</div>
<div style="left:2700.00px;top:542.57px;font:400 26.66px/26.66px 'Liberation Mono',monospace;color:#000000;white-space:pre;">:</div>
<div style="left:2716.00px;top:542.57px;font:400 26.66px/26.66px 'Liberation Mono',monospace;color:#000000;white-space:pre;"> Fri, 13 Feb 2026 02:16:13 GMT</div>
<div style="left:2636.00px;top:576.57px;font:400 26.66px/26.66px 'Liberation Mono',monospace;color:#000080;white-space:pre;">Content-Type</div>
<div style="left:2828.00px;top:576.57px;font:400 26.66px/26.66px 'Liberation Mono',monospace;color:#000000;white-space:pre;">:</div>
<div style="left:2844.00px;top:576.57px;font:400 26.66px/26.66px 'Liberation Mono',monospace;color:#000000;white-space:pre;"> text/html;</div>
<div style="left:2636.00px;top:610.57px;font:400 26.66px/26.66px 'Liberation Mono',monospace;color:#000000;white-space:pre;">charset=utf-8</div>
<div style="left:2636.00px;top:644.57px;font:400 26.66px/26.66px 'Liberation Mono',monospace;color:#000080;white-space:pre;">Content-Length</div>
<div style="left:2860.00px;top:644.57px;font:400 26.66px/26.66px 'Liberation Mono',monospace;color:#000000;white-space:pre;">:</div>
<div style="left:2876.00px;top:644.57px;font:400 26.66px/26.66px 'Liberation Mono',monospace;color:#000000;white-space:pre;"> 199</div>
<div style="left:2636.00px;top:678.57px;font:400 26.66px/26.66px 'Liberation Mono',monospace;color:#000080;white-space:pre;">Connection</div>
<div style="left:2796.00px;top:678.57px;font:400 26.66px/26.66px 'Liberation Mono',monospace;color:#000000;white-space:pre;">:</div>
<div style="left:2812.00px;top:678.57px;font:400 26.66px/26.66px 'Liberation Mono',monospace;color:#000000;white-space:pre;"> keep-alive</div>
<div style="left:2636.00px;top:712.57px;font:400 26.66px/26.66px 'Liberation Mono',monospace;color:#000080;white-space:pre;">Location</div>
<div style="left:2764.00px;top:712.57px;font:400 26.66px/26.66px 'Liberation Mono',monospace;color:#000000;white-space:pre;">:</div>
<div style="left:2780.00px;top:712.57px;font:400 26.66px/26.66px 'Liberation Mono',monospace;color:#000000;white-space:pre;"> /notes</div>
<div style="left:2636.00px;top:746.57px;font:400 26.66px/26.66px 'Liberation Mono',monospace;color:#000080;white-space:pre;">Vary</div>
<div style="left:2700.00px;top:746.57px;font:400 26.66px/26.66px 'Liberation Mono',monospace;color:#000000;white-space:pre;">:</div>
<div style="left:2716.00px;top:746.57px;font:400 26.66px/26.66px 'Liberation Mono',monospace;color:#000000;white-space:pre;"> Cookie</div>
<div style="left:2636.00px;top:814.57px;font:400 26.66px/26.66px 'Liberation Mono',monospace;color:#006400;white-space:pre;">&lt;!doctype html&gt;</div>
<div style="left:2636.00px;top:848.57px;font:400 26.66px/26.66px 'Liberation Mono',monospace;color:#444444;white-space:pre;">&lt;</div>
<div style="left:2652.00px;top:848.57px;font:400 26.66px/26.66px 'Liberation Mono',monospace;color:#a010b8;white-space:pre;">html</div>
<div style="left:2732.00px;top:848.57px;font:400 26.66px/26.66px 'Liberation Mono',monospace;color:#0000a8;white-space:pre;">lang</div>
<div style="left:2796.00px;top:848.57px;font:400 26.66px/26.66px 'Liberation Mono',monospace;color:#000000;white-space:pre;">=</div>
<div style="left:2812.00px;top:848.57px;font:400 26.66px/26.66px 'Liberation Mono',monospace;color:#960000;white-space:pre;">en</div>
<div style="left:2844.00px;top:848.57px;font:400 26.66px/26.66px 'Liberation Mono',monospace;color:#444444;white-space:pre;">&gt;</div>
<div style="left:2636.00px;top:882.57px;font:400 26.66px/26.66px 'Liberation Mono',monospace;color:#444444;white-space:pre;">     &lt;</div>
<div style="left:2732.00px;top:882.57px;font:400 26.66px/26.66px 'Liberation Mono',monospace;color:#a010b8;white-space:pre;">title</div>
<div style="left:2812.00px;top:882.57px;font:400 26.66px/26.66px 'Liberation Mono',monospace;color:#444444;white-space:pre;">&gt;</div>
<div style="left:2636.00px;top:916.57px;font:400 26.66px/26.66px 'Liberation Mono',monospace;color:#000000;white-space:pre;">          Redirecting...</div>
<div style="left:2636.00px;top:950.57px;font:400 26.66px/26.66px 'Liberation Mono',monospace;color:#444444;white-space:pre;">     &lt;/</div>
<div style="left:2748.00px;top:950.57px;font:400 26.66px/26.66px 'Liberation Mono',monospace;color:#a010b8;white-space:pre;">title</div>
<div style="left:2828.00px;top:950.57px;font:400 26.66px/26.66px 'Liberation Mono',monospace;color:#444444;white-space:pre;">&gt;</div>
<div style="left:2636.00px;top:984.57px;font:400 26.66px/26.66px 'Liberation Mono',monospace;color:#444444;white-space:pre;">     &lt;</div>
<div style="left:2732.00px;top:984.57px;font:400 26.66px/26.66px 'Liberation Mono',monospace;color:#a010b8;white-space:pre;">h1</div>
<div style="left:2764.00px;top:984.57px;font:400 26.66px/26.66px 'Liberation Mono',monospace;color:#444444;white-space:pre;">&gt;</div>
<div style="left:2636.00px;top:1018.57px;font:400 26.66px/26.66px 'Liberation Mono',monospace;color:#000000;white-space:pre;">          Redirecting...</div>
<div style="left:2636.00px;top:1052.57px;font:400 26.66px/26.66px 'Liberation Mono',monospace;color:#444444;white-space:pre;">     &lt;/</div>
<div style="left:2748.00px;top:1052.57px;font:400 26.66px/26.66px 'Liberation Mono',monospace;color:#a010b8;white-space:pre;">h1</div>
<div style="left:2780.00px;top:1052.57px;font:400 26.66px/26.66px 'Liberation Mono',monospace;color:#444444;white-space:pre;">&gt;</div>
<div style="left:2636.00px;top:1086.57px;font:400 26.66px/26.66px 'Liberation Mono',monospace;color:#444444;white-space:pre;">     &lt;</div>
<div style="left:2732.00px;top:1086.57px;font:400 26.66px/26.66px 'Liberation Mono',monospace;color:#a010b8;white-space:pre;">p</div>
<div style="left:2748.00px;top:1086.57px;font:400 26.66px/26.66px 'Liberation Mono',monospace;color:#444444;white-space:pre;">&gt;</div>
<div style="left:2636.00px;top:1120.57px;font:400 26.66px/26.66px 'Liberation Mono',monospace;color:#000000;white-space:pre;">          You should be redirected</div>
<div style="left:2636.00px;top:1154.57px;font:400 26.66px/26.66px 'Liberation Mono',monospace;color:#000000;white-space:pre;">          automatically to the target</div>
<div style="left:2636.00px;top:1188.57px;font:400 26.66px/26.66px 'Liberation Mono',monospace;color:#000000;white-space:pre;">           URL: &lt;</div>
<div style="left:2908.00px;top:1188.57px;font:400 26.66px/26.66px 'Liberation Mono',monospace;color:#a010b8;white-space:pre;">a</div>
<div style="left:2940.00px;top:1188.57px;font:400 26.66px/26.66px 'Liberation Mono',monospace;color:#0000a8;white-space:pre;">href</div>
<div style="left:3004.00px;top:1188.57px;font:400 26.66px/26.66px 'Liberation Mono',monospace;color:#000000;white-space:pre;">="</div>
<div style="left:3036.00px;top:1188.57px;font:400 26.66px/26.66px 'Liberation Mono',monospace;color:#960000;white-space:pre;">/notes</div>
<div style="left:3132.00px;top:1188.57px;font:400 26.66px/26.66px 'Liberation Mono',monospace;color:#000000;white-space:pre;">"&gt;</div>
<div style="left:2636.00px;top:1222.57px;font:400 26.66px/26.66px 'Liberation Mono',monospace;color:#000000;white-space:pre;">               /notes</div>
<div style="left:2636.00px;top:1256.57px;font:400 26.66px/26.66px 'Liberation Mono',monospace;color:#444444;white-space:pre;">          &lt;/</div>
<div style="left:2828.00px;top:1256.57px;font:400 26.66px/26.66px 'Liberation Mono',monospace;color:#a010b8;white-space:pre;">a</div>
<div style="left:2844.00px;top:1256.57px;font:400 26.66px/26.66px 'Liberation Mono',monospace;color:#444444;white-space:pre;">&gt;</div>
<div style="left:2636.00px;top:1290.57px;font:400 26.66px/26.66px 'Liberation Mono',monospace;color:#000000;white-space:pre;">          . If not, click the link.</div>
<div style="left:2602.50px;top:474.57px;font:400 26.66px/26.66px 'Liberation Mono',monospace;color:#7a7a7a;white-space:pre;">1</div>
<div style="left:2602.50px;top:508.57px;font:400 26.66px/26.66px 'Liberation Mono',monospace;color:#7a7a7a;white-space:pre;">2</div>
<div style="left:2602.50px;top:542.57px;font:400 26.66px/26.66px 'Liberation Mono',monospace;color:#7a7a7a;white-space:pre;">3</div>
<div style="left:2602.50px;top:576.57px;font:400 26.66px/26.66px 'Liberation Mono',monospace;color:#7a7a7a;white-space:pre;">4</div>
<div style="left:2602.50px;top:644.57px;font:400 26.66px/26.66px 'Liberation Mono',monospace;color:#7a7a7a;white-space:pre;">5</div>
<div style="left:2602.50px;top:678.57px;font:400 26.66px/26.66px 'Liberation Mono',monospace;color:#7a7a7a;white-space:pre;">6</div>
<div style="left:2602.50px;top:712.57px;font:400 26.66px/26.66px 'Liberation Mono',monospace;color:#7a7a7a;white-space:pre;">7</div>
<div style="left:2602.50px;top:746.57px;font:400 26.66px/26.66px 'Liberation Mono',monospace;color:#7a7a7a;white-space:pre;">8</div>
<div style="left:2602.50px;top:780.57px;font:400 26.66px/26.66px 'Liberation Mono',monospace;color:#7a7a7a;white-space:pre;">9</div>
<div style="left:2586.50px;top:814.57px;font:400 26.66px/26.66px 'Liberation Mono',monospace;color:#7a7a7a;white-space:pre;">10</div>
<div style="left:2586.50px;top:848.57px;font:400 26.66px/26.66px 'Liberation Mono',monospace;color:#7a7a7a;white-space:pre;">11</div>
<div style="left:2586.50px;top:882.57px;font:400 26.66px/26.66px 'Liberation Mono',monospace;color:#7a7a7a;white-space:pre;">12</div>
<div style="left:2586.50px;top:984.57px;font:400 26.66px/26.66px 'Liberation Mono',monospace;color:#7a7a7a;white-space:pre;">13</div>
<div style="left:2586.50px;top:1086.57px;font:400 26.66px/26.66px 'Liberation Mono',monospace;color:#7a7a7a;white-space:pre;">14</div>
<div style="left:2586.50px;top:1324.57px;font:400 26.66px/26.66px 'Liberation Mono',monospace;color:#7a7a7a;white-space:pre;">15</div>
<div style="left:1920px;top:322px;width:658px;height:143px;background:#ffffff;"></div>
<div style="left:2580px;top:322px;width:678px;height:143px;background:#ffffff;"></div>
<div style="left:1940.00px;top:369.96px;font:700 32px/32px 'Liberation Sans',sans-serif;color:#111;white-space:pre;letter-spacing:0.901px;">Request</div>
<div style="left:1950.00px;top:425.03px;font:400 26px/26px 'Liberation Sans',sans-serif;color:#222;white-space:pre;letter-spacing:1.619px;">Pretty</div>
<div style="left:2084.00px;top:425.03px;font:400 26px/26px 'Liberation Sans',sans-serif;color:#555;white-space:pre;letter-spacing:-0.368px;">Raw</div>
<div style="left:2194.00px;top:425.03px;font:400 26px/26px 'Liberation Sans',sans-serif;color:#555;white-space:pre;letter-spacing:2.882px;">Hex</div>
<div style="left:1920px;top:459.5px;width:136px;height:4px;background:#f06a35;"></div>
<div style="left:1920px;top:463.5px;width:658px;height:1.5px;background:#d4d4d4;"></div>
<svg style="left:2348px;top:419px;" width="34" height="34" viewBox="0 0 34 34"><path d="M3 17 C9 7 25 7 31 17 C25 27 9 27 3 17Z" fill="none" stroke="#444" stroke-width="2.4"/><circle cx="17" cy="17" r="5" fill="none" stroke="#444" stroke-width="2.4"/><path d="M5 3 L29 31" stroke="#444" stroke-width="2.6"/></svg>
<div style="left:2404px;top:417.5px;width:38px;height:35.5px;background:#2b63a5;border-radius:7px"></div>
<svg style="left:2404px;top:417.5px;" width="38" height="36" viewBox="0 0 38 36"><path d="M9 10 H29" stroke="#fff" stroke-width="2.6"/><path d="M9 18 H26 A4.5 4.5 0 0 1 26 27 H19" fill="none" stroke="#fff" stroke-width="2.6"/><path d="M9 27 H14" stroke="#fff" stroke-width="2.6"/><path d="M22 23 L18.5 27 L22 31" fill="none" stroke="#fff" stroke-width="2.2"/></svg>
<div style="left:2470.00px;top:425.03px;font:400 26px/26px 'Liberation Sans',sans-serif;color:#333;white-space:pre;letter-spacing:1.776px;">\n</div>
<div style="left:2521px;top:419px;width:36px;height:34px;background:#ffffff;border:1px solid #e2e2e2;border-radius:6px"></div>
<svg style="left:2521px;top:419px;" width="36" height="34" viewBox="0 0 36 34"><path d="M9 10 H27 M9 17 H27 M9 24 H27" stroke="#444" stroke-width="2.4"/></svg>
<div style="left:2600.00px;top:369.96px;font:700 32px/32px 'Liberation Sans',sans-serif;color:#111;white-space:pre;letter-spacing:0.694px;">Response</div>
<div style="left:2608.00px;top:425.03px;font:400 26px/26px 'Liberation Sans',sans-serif;color:#222;white-space:pre;letter-spacing:2.019px;">Pretty</div>
<div style="left:2745.00px;top:425.03px;font:400 26px/26px 'Liberation Sans',sans-serif;color:#555;white-space:pre;letter-spacing:-0.768px;">Raw</div>
<div style="left:2855.00px;top:425.03px;font:400 26px/26px 'Liberation Sans',sans-serif;color:#555;white-space:pre;letter-spacing:2.232px;">Hex</div>
<svg style="left:2948px;top:434px;" width="28" height="16" viewBox="0 0 28 16"><path d="M2 3 L12 13 L22 3" fill="none" stroke="#555" stroke-width="2.2"/><circle cx="24" cy="12" r="1.5" fill="#555"/></svg>
<div style="left:2580px;top:458.5px;width:136px;height:4.5px;background:#f06a35;"></div>
<div style="left:2580px;top:463.5px;width:678px;height:1.5px;background:#d4d4d4;"></div>
<svg style="left:3028px;top:419px;" width="34" height="34" viewBox="0 0 34 34"><path d="M3 17 C9 7 25 7 31 17 C25 27 9 27 3 17Z" fill="none" stroke="#444" stroke-width="2.4"/><circle cx="17" cy="17" r="5" fill="none" stroke="#444" stroke-width="2.4"/><path d="M5 3 L29 31" stroke="#444" stroke-width="2.6"/></svg>
<div style="left:3084px;top:417.5px;width:38px;height:35.5px;background:#2b63a5;border-radius:7px"></div>
<svg style="left:3084px;top:417.5px;" width="38" height="36" viewBox="0 0 38 36"><path d="M9 10 H29" stroke="#fff" stroke-width="2.6"/><path d="M9 18 H26 A4.5 4.5 0 0 1 26 27 H19" fill="none" stroke="#fff" stroke-width="2.6"/><path d="M9 27 H14" stroke="#fff" stroke-width="2.6"/><path d="M22 23 L18.5 27 L22 31" fill="none" stroke="#fff" stroke-width="2.2"/></svg>
<div style="left:3150.00px;top:425.03px;font:400 26px/26px 'Liberation Sans',sans-serif;color:#333;white-space:pre;letter-spacing:1.776px;">\n</div>
<div style="left:3201px;top:419px;width:36px;height:34px;background:#ffffff;border:1px solid #e2e2e2;border-radius:6px"></div>
<svg style="left:3201px;top:419px;" width="36" height="34" viewBox="0 0 36 34"><path d="M9 10 H27 M9 17 H27 M9 24 H27" stroke="#444" stroke-width="2.4"/></svg>
<div style="left:3088px;top:331px;width:149px;height:37.5px;background:#d9d9d9;border-radius:8px"></div>
<div style="left:3088px;top:331px;width:48px;height:37.5px;background:#2b63a5;border-radius:8px 0 0 8px"></div>
<div style="left:3187px;top:333px;width:1.5px;height:34px;background:#c4c4c4;"></div>
<div style="left:3100px;top:341px;width:8px;height:17px;background:#fff;"></div>
<div style="left:3113px;top:341px;width:8px;height:17px;background:#fff;"></div>
<div style="left:3150px;top:341px;width:22px;height:7px;background:#444;"></div>
<div style="left:3150px;top:352px;width:22px;height:7px;background:#444;"></div>
<div style="left:3201px;top:341px;width:22px;height:18px;background:#444;"></div>
<div style="left:1920px;top:1842px;width:658px;height:2px;background:#c4c4c4;"></div>
<div style="left:2580px;top:1842px;width:678px;height:2px;background:#c4c4c4;"></div>
<svg style="left:1931px;top:1866px;" width="42" height="42" viewBox="0 0 42 42"><circle cx="21" cy="21" r="18.5" fill="none" stroke="#444" stroke-width="2.6"/></svg>
<div style="left:1943.00px;top:1873.34px;font:400 28px/28px 'Liberation Sans',sans-serif;color:#444;white-space:pre;">?</div>
<svg style="left:1985px;top:1865px;" width="42" height="42" viewBox="0 0 42 42"><path d="M34.09 16.43 L40.06 17.83 L40.06 24.17 L34.09 25.57 L33.48 27.02 L36.72 32.23 L32.23 36.72 L27.02 33.48 L25.57 34.09 L24.17 40.06 L17.83 40.06 L16.43 34.09 L14.98 33.48 L9.77 36.72 L5.28 32.23 L8.52 27.02 L7.91 25.57 L1.94 24.17 L1.94 17.83 L7.91 16.43 L8.52 14.98 L5.28 9.77 L9.77 5.28 L14.98 8.52 L16.43 7.91 L17.83 1.94 L24.17 1.94 L25.57 7.91 L27.02 8.52 L32.23 5.28 L36.72 9.77 L33.48 14.98Z" fill="none" stroke="#444" stroke-width="2.6" stroke-linejoin="round"/><circle cx="21.0" cy="21.0" r="5.880000000000001" fill="none" stroke="#444" stroke-width="2.6"/></svg>
<div style="left:2039px;top:1864px;width:47px;height:48px;background:#ececec;border:1px solid #dedede;border-radius:7px"></div>
<svg style="left:2047px;top:1872px;" width="32" height="30" viewBox="0 0 32 30"><path d="M27 15 H5 M14 6 L5 15 L14 24" fill="none" stroke="#555" stroke-width="2.8"/></svg>
<div style="left:2096px;top:1864px;width:47px;height:48px;background:#ececec;border:1px solid #dedede;border-radius:7px"></div>
<svg style="left:2104px;top:1872px;" width="32" height="30" viewBox="0 0 32 30"><path d="M4 15 H26 M17 6 L26 15 L17 24" fill="none" stroke="#555" stroke-width="2.8"/></svg>
<div style="left:2165px;top:1865.5px;width:198px;height:50px;background:#ffffff;border:1.5px solid #c8c8c8;border-radius:8px"></div>
<div style="left:2185.00px;top:1875.03px;font:400 26px/26px 'Liberation Sans',sans-serif;color:#a8a8a8;white-space:pre;">Search</div>
<svg style="left:2321px;top:1870px;" width="34" height="34" viewBox="0 0 34 34"><circle cx="20" cy="13" r="8.5" fill="none" stroke="#555" stroke-width="2.4"/><path d="M14 19 L5 28" stroke="#555" stroke-width="2.8"/></svg>
<div style="left:2407.00px;top:1875.03px;font:400 26px/26px 'Liberation Sans',sans-serif;color:#111;white-space:pre;letter-spacing:1.133px;">0 highlights</div>
<svg style="left:2591px;top:1866px;" width="42" height="42" viewBox="0 0 42 42"><circle cx="21" cy="21" r="18.5" fill="none" stroke="#444" stroke-width="2.6"/></svg>
<div style="left:2603.00px;top:1873.34px;font:400 28px/28px 'Liberation Sans',sans-serif;color:#444;white-space:pre;">?</div>
<svg style="left:2645px;top:1865px;" width="42" height="42" viewBox="0 0 42 42"><path d="M34.09 16.43 L40.06 17.83 L40.06 24.17 L34.09 25.57 L33.48 27.02 L36.72 32.23 L32.23 36.72 L27.02 33.48 L25.57 34.09 L24.17 40.06 L17.83 40.06 L16.43 34.09 L14.98 33.48 L9.77 36.72 L5.28 32.23 L8.52 27.02 L7.91 25.57 L1.94 24.17 L1.94 17.83 L7.91 16.43 L8.52 14.98 L5.28 9.77 L9.77 5.28 L14.98 8.52 L16.43 7.91 L17.83 1.94 L24.17 1.94 L25.57 7.91 L27.02 8.52 L32.23 5.28 L36.72 9.77 L33.48 14.98Z" fill="none" stroke="#444" stroke-width="2.6" stroke-linejoin="round"/><circle cx="21.0" cy="21.0" r="5.880000000000001" fill="none" stroke="#444" stroke-width="2.6"/></svg>
<div style="left:2698px;top:1864px;width:47px;height:48px;background:#ececec;border:1px solid #dedede;border-radius:7px"></div>
<svg style="left:2706px;top:1872px;" width="32" height="30" viewBox="0 0 32 30"><path d="M27 15 H5 M14 6 L5 15 L14 24" fill="none" stroke="#555" stroke-width="2.8"/></svg>
<div style="left:2757px;top:1864px;width:47px;height:48px;background:#ececec;border:1px solid #dedede;border-radius:7px"></div>
<svg style="left:2765px;top:1872px;" width="32" height="30" viewBox="0 0 32 30"><path d="M4 15 H26 M17 6 L26 15 L17 24" fill="none" stroke="#555" stroke-width="2.8"/></svg>
<div style="left:2825px;top:1865.5px;width:218px;height:50px;background:#ffffff;border:1.5px solid #c8c8c8;border-radius:8px"></div>
<div style="left:2845.00px;top:1875.03px;font:400 26px/26px 'Liberation Sans',sans-serif;color:#111;white-space:pre;">alert</div>
<svg style="left:3001px;top:1870px;" width="34" height="34" viewBox="0 0 34 34"><path d="M10 10 L25 25 M25 10 L10 25" stroke="#555" stroke-width="2.4"/></svg>
<div style="left:3088.50px;top:1875.03px;font:400 26px/26px 'Liberation Sans',sans-serif;color:#111;white-space:pre;letter-spacing:1.133px;">0 highlights</div>
<div style="left:3282.00px;top:341.96px;font:700 32px/32px 'Liberation Sans',sans-serif;color:#111;white-space:pre;letter-spacing:1.303px;">Inspector</div>
<div style="left:3476px;top:339px;width:100px;height:38px;background:#d9d9d9;border-radius:9px"></div>
<div style="left:3526px;top:339px;width:50px;height:38px;background:#2b63a5;border-radius:0 9px 9px 0"></div>
<div style="left:3489px;top:350px;width:4px;height:16px;background:#444;"></div>
<div style="left:3495px;top:350px;width:14px;height:16px;background:#444;"></div>
<div style="left:3538px;top:350px;width:14px;height:16px;background:#fff;"></div>
<div style="left:3555px;top:350px;width:4px;height:16px;background:#fff;"></div>
<svg style="left:3598px;top:341px;" width="32" height="36" viewBox="0 0 32 36"><path d="M3 4 H29 M3 32 H29" stroke="#444" stroke-width="2.4"/><path d="M16 9 L11 14 H21Z M16 27 L11 22 H21Z" fill="#444"/></svg>
<svg style="left:3654px;top:341px;" width="32" height="36" viewBox="0 0 32 36"><path d="M3 18 H29" stroke="#444" stroke-width="2.4"/><path d="M16 13 L11 6 H21Z M16 23 L11 30 H21Z" fill="#444"/></svg>
<svg style="left:3711px;top:345px;" width="30" height="30" viewBox="0 0 30 30"><path d="M3 3 L27 27 M27 3 L3 27" stroke="#444" stroke-width="2.6"/></svg>
<div style="left:3260px;top:397px;width:504px;height:2px;background:#d8d8d8;"></div>
<div style="left:3260px;top:476px;width:504px;height:2px;background:#d8d8d8;"></div>
<div style="left:3260px;top:554px;width:504px;height:2px;background:#d8d8d8;"></div>
<div style="left:3260px;top:632px;width:504px;height:2px;background:#d8d8d8;"></div>
<div style="left:3260px;top:710px;width:504px;height:2px;background:#d8d8d8;"></div>
<div style="left:3260px;top:788px;width:504px;height:2px;background:#d8d8d8;"></div>
<div style="left:3260px;top:866px;width:504px;height:2px;background:#d8d8d8;"></div>
<div style="left:3616px;top:419.0px;width:51px;height:35px;background:#ececec;border-radius:17px"></div>
<div style="left:3635.00px;top:425.03px;font:400 26px/26px 'Liberation Sans',sans-serif;color:#222;white-space:pre;">2</div>
<div style="left:3279.00px;top:425.03px;font:400 26px/26px 'Liberation Sans',sans-serif;color:#111;white-space:pre;letter-spacing:1.458px;">Request attributes</div>
<svg style="left:3713px;top:431.0px;" width="26" height="15" viewBox="0 0 26 15"><path d="M2 2 L13.0 12 L24 2" fill="none" stroke="#444" stroke-width="2.4"/></svg>
<div style="left:3616px;top:497.2px;width:51px;height:35px;background:#ececec;border-radius:17px"></div>
<div style="left:3635.00px;top:503.23px;font:400 26px/26px 'Liberation Sans',sans-serif;color:#222;white-space:pre;">0</div>
<div style="left:3279.00px;top:503.23px;font:400 26px/26px 'Liberation Sans',sans-serif;color:#111;white-space:pre;letter-spacing:1.442px;">Request query parameters</div>
<svg style="left:3713px;top:509.2px;" width="26" height="15" viewBox="0 0 26 15"><path d="M2 2 L13.0 12 L24 2" fill="none" stroke="#444" stroke-width="2.4"/></svg>
<div style="left:3616px;top:575.4px;width:51px;height:35px;background:#ececec;border-radius:17px"></div>
<div style="left:3635.00px;top:581.43px;font:400 26px/26px 'Liberation Sans',sans-serif;color:#222;white-space:pre;">4</div>
<div style="left:3279.00px;top:581.43px;font:400 26px/26px 'Liberation Sans',sans-serif;color:#111;white-space:pre;letter-spacing:1.483px;">Request body parameters</div>
<svg style="left:3713px;top:587.4px;" width="26" height="15" viewBox="0 0 26 15"><path d="M2 2 L13.0 12 L24 2" fill="none" stroke="#444" stroke-width="2.4"/></svg>
<div style="left:3616px;top:653.6px;width:51px;height:35px;background:#ececec;border-radius:17px"></div>
<div style="left:3635.00px;top:659.63px;font:400 26px/26px 'Liberation Sans',sans-serif;color:#222;white-space:pre;">1</div>
<div style="left:3279.00px;top:659.63px;font:400 26px/26px 'Liberation Sans',sans-serif;color:#111;white-space:pre;letter-spacing:1.106px;">Request cookies</div>
<svg style="left:3713px;top:665.6px;" width="26" height="15" viewBox="0 0 26 15"><path d="M2 2 L13.0 12 L24 2" fill="none" stroke="#444" stroke-width="2.4"/></svg>
<div style="left:3600px;top:731.8px;width:67px;height:35px;background:#ececec;border-radius:17px"></div>
<div style="left:3627.00px;top:737.83px;font:400 26px/26px 'Liberation Sans',sans-serif;color:#222;white-space:pre;">21</div>
<div style="left:3279.00px;top:737.83px;font:400 26px/26px 'Liberation Sans',sans-serif;color:#111;white-space:pre;letter-spacing:1.284px;">Request headers</div>
<svg style="left:3713px;top:743.8px;" width="26" height="15" viewBox="0 0 26 15"><path d="M2 2 L13.0 12 L24 2" fill="none" stroke="#444" stroke-width="2.4"/></svg>
<div style="left:3616px;top:810.0px;width:51px;height:35px;background:#ececec;border-radius:17px"></div>
<div style="left:3635.00px;top:816.03px;font:400 26px/26px 'Liberation Sans',sans-serif;color:#222;white-space:pre;">7</div>
<div style="left:3279.00px;top:816.03px;font:400 26px/26px 'Liberation Sans',sans-serif;color:#111;white-space:pre;letter-spacing:1.169px;">Response headers</div>
<svg style="left:3713px;top:822.0px;" width="26" height="15" viewBox="0 0 26 15"><path d="M2 2 L13.0 12 L24 2" fill="none" stroke="#444" stroke-width="2.4"/></svg>
<div style="left:3766px;top:321px;width:65px;height:281px;background:#c9d9ef;"></div>
<div style="left:3766px;top:602px;width:65px;height:2px;background:#c8c8c8;"></div>
<div style="left:3766px;top:835px;width:65px;height:2px;background:#c8c8c8;"></div>
<div style="left:3766px;top:1212px;width:65px;height:2px;background:#c8c8c8;"></div>
<div style="left:3766px;top:1858px;width:65px;height:2px;background:#c8c8c8;"></div>
<svg style="left:3782px;top:352px;" width="36" height="34" viewBox="0 0 36 34"><path d="M8 14 V5 H27 V14" fill="none" stroke="#4a5a68" stroke-width="2.4"/><path d="M2 15.5 H34" stroke="#5a6a78" stroke-width="3"/><circle cx="11.5" cy="25" r="4" fill="none" stroke="#2a3a48" stroke-width="2.4"/><circle cx="24.5" cy="25" r="4" fill="none" stroke="#2a3a48" stroke-width="2.4"/><path d="M15.5 25 H20.5" stroke="#2a3a48" stroke-width="2.2"/></svg>
<svg style="left:3784px;top:633px;" width="32" height="36" viewBox="0 0 32 36"><path d="M3.5 3 H20 L27.5 10.5 V32.5 H3.5Z" fill="none" stroke="#555" stroke-width="2.6" stroke-linejoin="round"/><path d="M19.5 3 V11 H27.5" fill="none" stroke="#555" stroke-width="2"/><path d="M9 14 H14 M9 19.5 H23 M9 25 H23" stroke="#555" stroke-width="2.6"/></svg>
<svg style="left:3785px;top:865px;" width="30" height="40" viewBox="0 0 30 40"><path d="M5 2 H21.5 L17.5 13.5 H26.5 L9.5 37 L13 20.5 H2.5 Z" fill="none" stroke="#555" stroke-width="2.4" stroke-linejoin="miter"/></svg>
<svg style="left:3780px;top:1876px;" width="38" height="38" viewBox="0 0 38 38"><path d="M30.84 14.87 L36.24 16.13 L36.24 21.87 L30.84 23.13 L30.29 24.45 L33.22 29.16 L29.16 33.22 L24.45 30.29 L23.13 30.84 L21.87 36.24 L16.13 36.24 L14.87 30.84 L13.55 30.29 L8.84 33.22 L4.78 29.16 L7.71 24.45 L7.16 23.13 L1.76 21.87 L1.76 16.13 L7.16 14.87 L7.71 13.55 L4.78 8.84 L8.84 4.78 L13.55 7.71 L14.87 7.16 L16.13 1.76 L21.87 1.76 L23.13 7.16 L24.45 7.71 L29.16 4.78 L33.22 8.84 L30.29 13.55Z" fill="none" stroke="#444" stroke-width="2.4" stroke-linejoin="round"/><circle cx="19.0" cy="19.0" r="5.32" fill="none" stroke="#444" stroke-width="2.4"/></svg>
<div style="left:3816.15px;top:415.00px;font:400 29px/29px 'Liberation Sans',sans-serif;color:#111;white-space:pre;letter-spacing:1.922px;transform:rotate(90deg);transform-origin:0 0">Inspector</div>
<div style="left:3816.15px;top:698.00px;font:400 29px/29px 'Liberation Sans',sans-serif;color:#111;white-space:pre;letter-spacing:2.186px;transform:rotate(90deg);transform-origin:0 0">Notes</div>
<div style="left:3816.15px;top:932.00px;font:400 29px/29px 'Liberation Sans',sans-serif;color:#111;white-space:pre;letter-spacing:2.203px;transform:rotate(90deg);transform-origin:0 0">Custom actions</div>
</div></body></html>
